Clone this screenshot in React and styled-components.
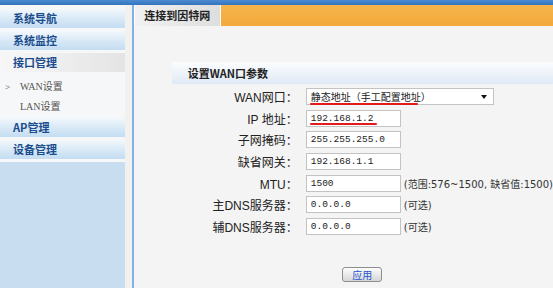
import React from 'react'
import styled, { createGlobalStyle } from 'styled-components'

const GlobalStyle = createGlobalStyle`
  html, body, #root { height: 100%; margin: 0; }
  body {
    font-family: "Liberation Sans", "Noto Sans CJK SC", sans-serif;
    font-size: 11px;
    color: #222;
    background: #f4f4f4;
    overflow: hidden;
  }
`

const Page = styled.div`
  display: flex;
  flex-direction: column;
  height: 100%;
`
const TopBar = styled.div`
  height: 5px;
  flex-shrink: 0;
  background: linear-gradient(#4b8bd2, #3473bb);
`
const Body = styled.div`
  display: flex;
  flex: 1;
  min-height: 0;
`
const Sidebar = styled.div`
  width: 125px;
  display: flex;
  flex-direction: column;
  background: #c8ddf0;
`
const Menu = styled.div`
  background: #f6f7f8;
  padding: 4px 0 0;
`
const MenuHead = styled.div`
  height: 19px;
  line-height: 19px;
  margin-bottom: 3px;
  padding-left: 13px;
  font-weight: bold;
  font-size: 11px;
  color: #1b4d8e;
  font-family: "Noto Sans CJK SC", sans-serif;
  background: ${p => p.$active
    ? 'linear-gradient(to right, #f7f7f7, #e4e4e4)'
    : 'linear-gradient(to bottom, #f3f8fc 0%, #d6e8f6 55%, #c4ddf2 100%)'};
`
const SubList = styled.div`
  padding: 2px 0 1px;
`
const SubItem = styled.div`
  height: 20px;
  line-height: 20px;
  padding-left: 20px;
  position: relative;
  font-size: 10px;
  color: #555;
  font-family: "Liberation Serif", "Noto Sans CJK SC", serif;
`
const Arrow = styled.span`
  position: absolute;
  left: 5px;
  font-size: 9px;
  color: #333;
`
const Strip = styled.div`
  width: 7px;
  background: #f1f2ef;
`
const Line = styled.div`
  width: 2px;
  background: #80b1e2;
`
const Main = styled.div`
  flex: 1;
  display: flex;
  flex-direction: column;
  background: #f4f4f4;
`
const TabRow = styled.div`
  height: 21px;
  display: flex;
  gap: 1px;
  background: #fff;
`
const Tab = styled.div`
  width: 85px;
  margin-left: 1px;
  line-height: 21px;
  text-align: center;
  font-weight: bold;
  font-family: "Noto Sans CJK SC", sans-serif;
  color: #222;
  background: linear-gradient(to right, #f1f1f1, #dedede);
`
const Stripe = styled.div`
  flex: 1;
  background: linear-gradient(#f7b44c, #f3a93a);
`
const Panel = styled.div`
  padding: 36px 0 0 38px;
  display: flex;
  flex-direction: column;
`
const SectionHead = styled.div`
  height: 22px;
  line-height: 22px;
  padding-left: 16px;
  font-weight: bold;
  font-family: "Noto Sans CJK SC", sans-serif;
  background: linear-gradient(#fcfdfe, #dfe9f5);
`
const Form = styled.div`
  margin-top: 2px;
  display: flex;
  flex-direction: column;
`
const Row = styled.div`
  height: 21.6px;
  display: grid;
  grid-template-columns: 126px auto 1fr;
  column-gap: 8px;
  align-items: center;
`
const Label = styled.div`
  text-align: right;
  white-space: nowrap;
  font-size: 12px;
`
const Field = styled.div`
  position: relative;
  width: ${p => p.$w}px;
  height: 17px;
  box-sizing: border-box;
  border: 1px solid #c3c3c3;
  background: #fff;
  padding: 0 4px;
  line-height: 15px;
  font-family: "Liberation Mono", "Noto Sans CJK SC", monospace;
  font-size: 9.5px;
  color: #222;
`
const SelectText = styled.span`
  font-family: "Noto Sans CJK SC", sans-serif;
  font-size: 10px;
`
const Caret = styled.span`
  position: absolute;
  right: 6px;
  top: 6px;
  border-left: 3px solid transparent;
  border-right: 3px solid transparent;
  border-top: 4px solid #111;
`
const Mark = styled.span`
  position: absolute;
  left: 3px;
  bottom: ${p => p.$b}px;
  width: ${p => p.$w}px;
  height: 2px;
  border-radius: 1px;
  background: #e11b1b;
`
const Hint = styled.div`
  margin-left: -5px;
  white-space: nowrap;
  font-family: "DejaVu Sans", "Noto Sans CJK SC", sans-serif;
  font-size: 10px;
  color: #333;
`
const Actions = styled.div`
  margin-top: 30px;
  display: flex;
  justify-content: center;
`
const Button = styled.button`
  width: 40px;
  height: 15px;
  padding: 0;
  border: 1px solid #8d8d8d;
  border-radius: 3px;
  background: linear-gradient(#fdfdfd, #d6d6d6);
  font-family: "Noto Sans CJK SC", sans-serif;
  font-size: 10px;
  line-height: 13px;
  color: #2456cf;
`

const rows = [
  { label: 'IP 地址：', value: '192.168.1.2', mark: 67 },
  { label: '子网掩码：', value: '255.255.255.0' },
  { label: '缺省网关：', value: '192.168.1.1' },
  { label: 'MTU：', value: '1500', hint: '(范围:576~1500, 缺省值:1500)' },
  { label: '主DNS服务器：', value: '0.0.0.0', hint: '(可选)' },
  { label: '辅DNS服务器：', value: '0.0.0.0', hint: '(可选)' },
]

export default function App() {
  return (
    <Page>
      <GlobalStyle />
      <TopBar />
      <Body>
        <Sidebar>
          <Menu>
            <MenuHead>系统导航</MenuHead>
            <MenuHead>系统监控</MenuHead>
            <MenuHead $active>接口管理</MenuHead>
            <SubList>
              <SubItem><Arrow>&gt;</Arrow>WAN设置</SubItem>
              <SubItem>LAN设置</SubItem>
            </SubList>
            <MenuHead>AP管理</MenuHead>
            <MenuHead>设备管理</MenuHead>
          </Menu>
        </Sidebar>
        <Strip />
        <Line />
        <Main>
          <TabRow>
            <Tab>连接到因特网</Tab>
            <Stripe />
          </TabRow>
          <Panel>
            <SectionHead>设置WAN口参数</SectionHead>
            <Form>
              <Row>
                <Label>WAN网口：</Label>
                <Field $w={188}>
                  <SelectText>静态地址（手工配置地址）</SelectText>
                  <Caret />
                  <Mark $w={108} $b={-1} />
                </Field>
              </Row>
              {rows.map(r => (
                <Row key={r.label}>
                  <Label>{r.label}</Label>
                  <Field $w={95}>
                    {r.value}
                    {r.mark && <Mark $w={r.mark} $b={1} />}
                  </Field>
                  {r.hint && <Hint>{r.hint}</Hint>}
                </Row>
              ))}
            </Form>
            <Actions>
              <Button>应用</Button>
            </Actions>
          </Panel>
        </Main>
      </Body>
    </Page>
  )
}
